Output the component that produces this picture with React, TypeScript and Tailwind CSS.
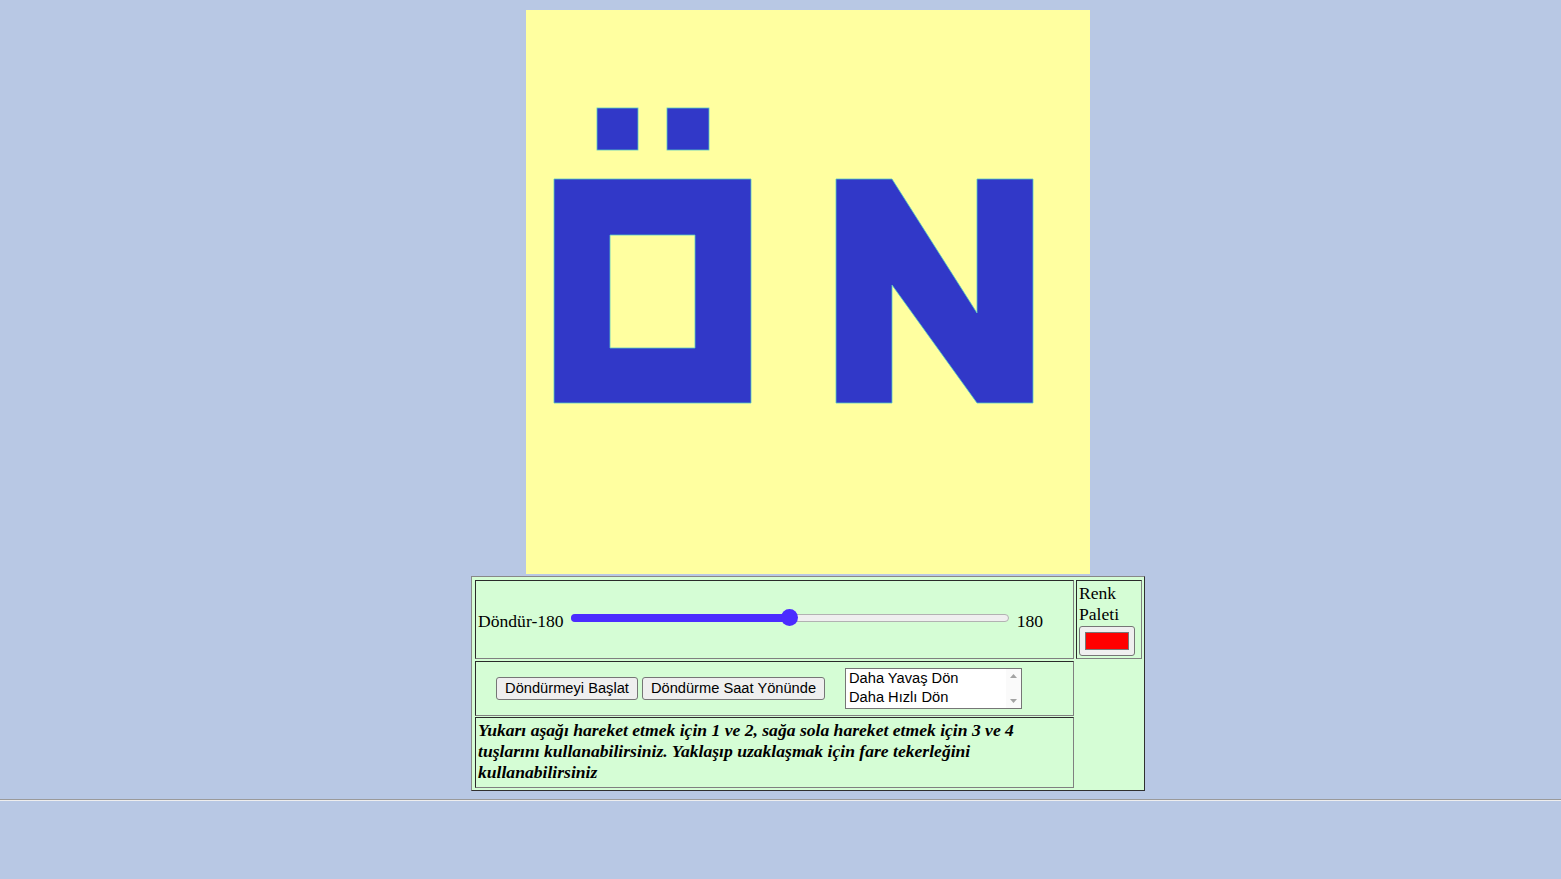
import React from "react";

const serif = { fontFamily: '"Liberation Serif", "Times New Roman", serif' };
const sans = { fontFamily: '"Liberation Sans", Arial, sans-serif' };

function Canvas() {
  return (
    <svg width={564} height={564} viewBox="0 0 564 564" className="block bg-[#ffffa0]">
      <g fill="#3138c8" stroke="#55c8c4" strokeWidth={0.8}>
        <rect x={71} y={98} width={41} height={42} />
        <rect x={141} y={98} width={42} height={42} />
        <path d="M28 169 H225 V393 H28 Z M84 225 V338 H169 V225 Z" fillRule="evenodd" />
        <path d="M310 169 H366 L451 303 V169 H507 V393 H451 L366 275 V393 H310 Z" />
      </g>
    </svg>
  );
}

function Slider() {
  return (
    <div className="relative h-[18px] w-[440px] mx-[2px] mb-[4px]">
      <div className="absolute left-[1px] right-[1px] top-[5px] h-[8px] rounded-full bg-[#efefef] border border-[#b2b2b2]" />
      <div className="absolute left-[1px] top-[5px] h-[8px] w-[220px] rounded-l-full bg-[#4b2cff]" />
      <div className="absolute left-[211px] top-0 h-[17px] w-[17px] rounded-full bg-[#4b2cff]" />
    </div>
  );
}

const cell =
  "border border-t-[#2a2a2a] border-l-[#2a2a2a] border-r-[#808080] border-b-[#808080]";

export default function App() {
  return (
    <div className="min-h-[879px] bg-[#b8c8e4] text-black">
      <div className="flex flex-col items-center pl-[55px] pt-[10px]">
        <Canvas />
        <div className="mt-[2px] border border-t-[#888888] border-l-[#888888] border-r-[#303030] border-b-[#303030] bg-[#d5fdd5] pt-[3px] pb-[2px] pl-[3px] pr-[2px] grid grid-cols-[599px_66px] grid-rows-[79px_55px_71px] gap-x-[2px] gap-y-[1.5px]">
          <div className={`${cell} flex items-center px-[2px]`} style={serif}>
            <span className="text-[17.6px] leading-[21px] mt-[3px]">Döndür-180</span>
            <span className="w-[4px]" />
            <Slider />
            <span className="w-[5px]" />
            <span className="text-[17.6px] leading-[21px] mt-[3px]">180</span>
          </div>
          <div className={`${cell} px-[2px] pt-[2px]`} style={serif}>
            <div className="text-[17.6px] leading-[21px]">Renk</div>
            <div className="text-[17.6px] leading-[21px]">Paleti</div>
            <div className="mt-[1px] h-[30px] w-[56px] rounded-[3px] border border-[#767676] bg-[#efefef] flex items-center justify-center">
              <div className="h-[18px] w-[44px] border border-[#777777] bg-[#ff0000]" />
            </div>
          </div>
          <div className={`${cell} flex items-center pl-[20px]`} style={sans}>
            <div className="h-[23px] w-[142px] rounded-[3px] border border-[#767676] bg-[#efefef] flex items-center justify-center text-[14.67px] leading-[17px]">
              Döndürmeyi Başlat
            </div>
            <div className="ml-[4px] h-[23px] w-[183px] rounded-[3px] border border-[#767676] bg-[#efefef] flex items-center justify-center text-[14.67px] leading-[17px]">
              Döndürme Saat Yönünde
            </div>
            <div className="ml-[20px] h-[41px] w-[177px] border border-[#767676] bg-white flex">
              <div className="flex-1 pl-[3px] text-[14.67px] leading-[19px]">
                <div>Daha Yavaş Dön</div>
                <div>Daha Hızlı Dön</div>
              </div>
              <div className="w-[15px] bg-[#fafafa] flex flex-col items-center justify-between py-[5px]">
                <svg width="7" height="4" viewBox="0 0 7 4"><path d="M0 4 L3.5 0 L7 4 Z" fill="#a3a3a3" /></svg>
                <svg width="7" height="4" viewBox="0 0 7 4"><path d="M0 0 L3.5 4 L7 0 Z" fill="#a3a3a3" /></svg>
              </div>
            </div>
          </div>
          <div />
          <div className={`${cell} px-[2px] pt-[2px]`} style={serif}>
            <p className="text-[17.6px] leading-[21px] font-bold italic">
              Yukarı aşağı hareket etmek için 1 ve 2, sağa sola hareket etmek için 3 ve 4 tuşlarını kullanabilirsiniz. Yaklaşıp uzaklaşmak için fare tekerleğini kullanabilirsiniz
            </p>
          </div>
          <div />
        </div>
      </div>
      <div className="mt-[8px] border-t border-b border-t-[#9a9a9a] border-b-[#eeeeee]" />
    </div>
  );
}
